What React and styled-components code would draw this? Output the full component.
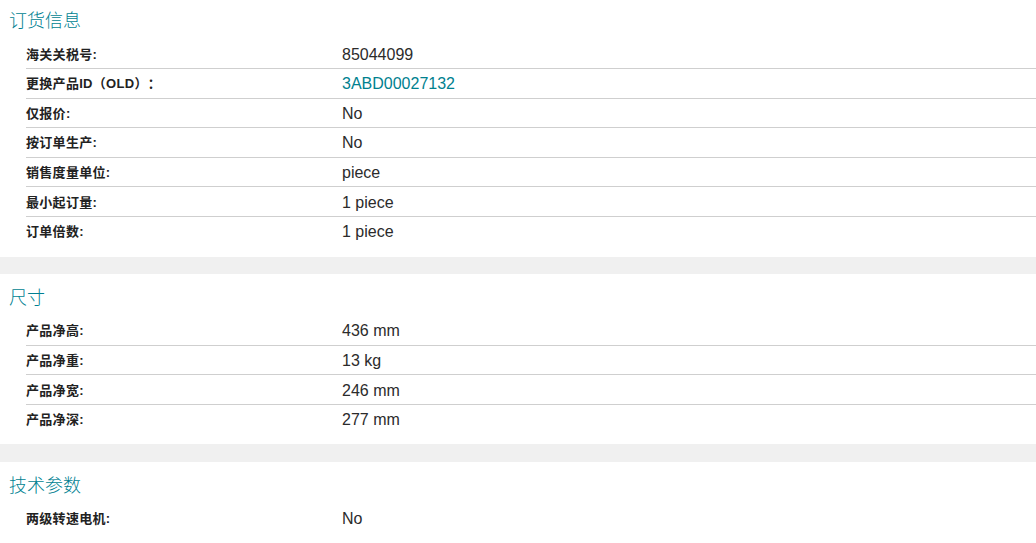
import React from "react";
import styled, { createGlobalStyle } from "styled-components";

const Global = createGlobalStyle`
  html, body { margin: 0; padding: 0; background: #ffffff; }
  body { font-family: "Liberation Sans", Arial, "Noto Sans CJK SC", sans-serif; }
  * { box-sizing: border-box; }
`;

const Page = styled.div`
  width: 1036px;
  background: #ffffff;
`;

const Section = styled.section`
  background: #ffffff;
  padding: ${(p) => (p.$first ? "7px" : "10px")} 0 9.8px 0;
`;

const Band = styled.div`
  height: 17.3px;
  background: #f0f0f0;
`;

const Title = styled.h2`
  margin: 0 0 8.2px 0;
  padding-left: 9px;
  font-family: "Noto Sans CJK SC", sans-serif;
  font-weight: 300;
  font-size: 18px;
  line-height: 24px;
  height: 24px;
  color: #007f91;
`;

const List = styled.div`
  margin-left: 26px;
  display: flex;
  flex-direction: column;
`;

const Row = styled.div`
  display: grid;
  grid-template-columns: 316px 1fr;
  align-items: center;
  height: 29.67px;
  border-bottom: 1px solid #cfcfcf;
  &:last-child {
    border-bottom-color: transparent;
  }
`;

const Label = styled.div`
  font-family: "Liberation Sans", "Noto Sans CJK SC", sans-serif;
  font-weight: 700;
  font-size: 13px;
  line-height: 18px;
  letter-spacing: 0.3px;
  color: #222222;
  text-spacing-trim: space-all;
  padding-top: 2px;
`;

const Value = styled.div`
  font-family: "Liberation Sans", Arial, sans-serif;
  font-size: 16px;
  line-height: 18px;
  color: ${(p) => (p.$link ? "#00818f" : "#2b2b2b")};
  padding-top: 2px;
`;

const sections = [
  {
    title: "订货信息",
    rows: [
      ["海关关税号:", "85044099"],
      ["更换产品ID（OLD）：", "3ABD00027132", true],
      ["仅报价:", "No"],
      ["按订单生产:", "No"],
      ["销售度量单位:", "piece"],
      ["最小起订量:", "1 piece"],
      ["订单倍数:", "1 piece"],
    ],
  },
  {
    title: "尺寸",
    rows: [
      ["产品净高:", "436 mm"],
      ["产品净重:", "13 kg"],
      ["产品净宽:", "246 mm"],
      ["产品净深:", "277 mm"],
    ],
  },
  {
    title: "技术参数",
    rows: [["两级转速电机:", "No"]],
  },
];

export default function App() {
  return (
    <Page>
      <Global />
      {sections.map((s, i) => (
        <React.Fragment key={s.title}>
          {i > 0 && <Band />}
          <Section $first={i === 0}>
            <Title>{s.title}</Title>
            <List>
              {s.rows.map(([label, value, link]) => (
                <Row key={label}>
                  <Label>{label}</Label>
                  <Value $link={link}>{value}</Value>
                </Row>
              ))}
            </List>
          </Section>
        </React.Fragment>
      ))}
    </Page>
  );
}
